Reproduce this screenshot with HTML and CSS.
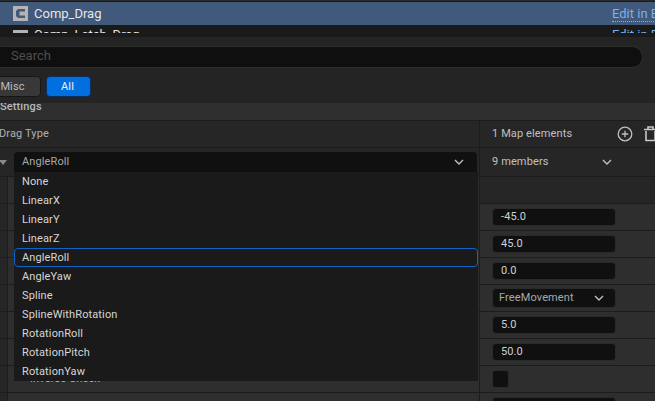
FILE: index.html
```html
<!DOCTYPE html>
<html lang="en">
<head>
  <meta charset="UTF-8" />
  <title>Comp_Drag Details</title>
  <link rel="stylesheet" href="styles.css">
</head>
<body>
  <svg class="icon-defs" width="0" height="0">
    <symbol id="chevron" viewBox="0 0 10 6"><polyline points="1,1 5,5 9,1" fill="none" stroke="#c0c0c0" stroke-width="1.4"/></symbol>
    <symbol id="comp" viewBox="0 0 15 15">
      <path fill="#b4b4b4" fill-rule="evenodd" d="M0 0H15V15H0Z M5 3L3 5V10L5 12H12V9.5H6.5V5.5H12V3Z"/>
    </symbol>
  </svg>

  <div class="asset-list">
    <div class="asset-row selected">
      <svg class="asset-icon"><use href="#comp"/></svg>
      <span class="asset-name">Comp_Drag</span>
      <a class="edit-link">Edit in Blueprint</a>
    </div>
    <div class="asset-row">
      <svg class="asset-icon"><use href="#comp"/></svg>
      <span class="asset-name">Comp_Latch_Drag</span>
      <a class="edit-link">Edit in Blueprint</a>
    </div>
  </div>

  <div class="panel">
    <div class="search">Search</div>
    <div class="filters">
      <button class="filter">Misc</button>
      <button class="filter active">All</button>
    </div>

    <div class="details">
      <div class="section-title"><span>Settings</span></div>

      <div class="row">
        <div class="cell-left label"><span class="drag-label">Drag Type</span></div>
        <div class="cell-right">
          <span class="map-count">1 Map elements</span>
          <svg class="add-icon" width="16" height="16" viewBox="0 0 16 16">
            <circle cx="8" cy="8" r="6.8" fill="none" stroke="#c0c0c0" stroke-width="1.3"/>
            <path d="M8 4.8V11.2M4.8 8H11.2" stroke="#c0c0c0" stroke-width="1.3"/>
          </svg>
          <svg class="trash-icon" width="14" height="16" viewBox="0 0 14 16">
            <path d="M0 3.5H13M4 3V1H9V3M2 5V14.5H11V5" fill="none" stroke="#c8c8c8" stroke-width="1.6"/>
          </svg>
        </div>
      </div>

      <div class="row tall">
        <div class="cell-left">
          <span class="collapse"></span>
          <div class="combo">AngleRoll<svg class="chevron"><use href="#chevron"/></svg></div>
        </div>
        <div class="cell-right">
          <span class="members">9 members</span>
          <svg class="chevron"><use href="#chevron"/></svg>
        </div>
      </div>

      <div class="row"><div class="cell-left nested"></div><div class="cell-right"></div></div>
      <div class="row"><div class="cell-left nested"></div><div class="cell-right"><div class="field num">-45.0</div></div></div>
      <div class="row"><div class="cell-left nested"></div><div class="cell-right"><div class="field num">45.0</div></div></div>
      <div class="row"><div class="cell-left nested"></div><div class="cell-right"><div class="field num">0.0</div></div></div>
      <div class="row"><div class="cell-left nested"></div><div class="cell-right"><div class="field pick">FreeMovement<svg class="chevron"><use href="#chevron"/></svg></div></div></div>
      <div class="row"><div class="cell-left nested"></div><div class="cell-right"><div class="field num">5.0</div></div></div>
      <div class="row"><div class="cell-left nested"></div><div class="cell-right"><div class="field num">50.0</div></div></div>
      <div class="row"><div class="cell-left nested label"><span class="nested-label">Inverse Check</span></div><div class="cell-right"><div class="checkbox"></div></div></div>
      <div class="row"><div class="cell-left nested"></div><div class="cell-right"><div class="field num last">None</div></div></div>

      <ul class="menu">
        <li>None</li>
        <li>LinearX</li>
        <li>LinearY</li>
        <li>LinearZ</li>
        <li class="current">AngleRoll</li>
        <li>AngleYaw</li>
        <li>Spline</li>
        <li>SplineWithRotation</li>
        <li>RotationRoll</li>
        <li>RotationPitch</li>
        <li>RotationYaw</li>
      </ul>
    </div>
  </div>
</body>
</html>
```

FILE: styles.css
```css
html, body {
  margin: 0;
  height: 401px;
  overflow: hidden;
}
body {
  width: 655px;
  font-family: Roboto, sans-serif;
  font-size: 11px;
  letter-spacing: 0.12px;
  color: #c0c0c0;
  background-color: #242424;
}
.icon-defs {
  position: absolute;
}
.asset-list {
  height: 37px;
  padding-top: 2px;
  box-sizing: border-box;
  background-color: #1a1a1a;
  overflow: hidden;
  border-top: 1px solid #2a2a2a;
}
.asset-row {
  display: flex;
  align-items: center;
  height: 23px;
  padding-left: 13px;
  white-space: nowrap;
  position: relative;
}
.asset-row + .asset-row {
  height: 3px;
  align-items: flex-start;
  padding-top: 5px;
  box-sizing: content-box;
  overflow: hidden;
}
.asset-row + .asset-row .asset-name {
  margin-top: -3px;
}
.asset-row + .asset-row .edit-link {
  top: 2px;
}
.asset-row.selected {
  background-color: #41597a;
  margin-top: -1px;
}
.asset-icon {
  width: 15px;
  height: 15px;
  flex: none;
}
.asset-name {
  margin-left: 6px;
  font-size: 13px;
  letter-spacing: 0;
  color: #e6e6e6;
  flex: 1;
}
.edit-link {
  font-size: 13px;
  letter-spacing: 0;
  color: #7db0ee;
  border-bottom: 1px dotted #7db0ee;
  position: absolute;
  left: 612px;
}
.panel {
  padding-top: 9px;
}
.search {
  width: 653px;
  height: 22px;
  margin-left: -10px;
  box-sizing: border-box;
  padding-left: 20px;
  line-height: 18px;
  font-size: 13px;
  letter-spacing: 0;
  color: #4e4e4e;
  background-color: #0f0f0f;
  border: 1px solid #2e2e2e;
  border-radius: 11px;
}
.filters {
  display: flex;
  gap: 5px;
  margin: 8px 0 6px -10px;
}
.filter {
  width: 51px;
  height: 21px;
  padding: 0 6px 1px 0;
  font: 11px Roboto, sans-serif;
  letter-spacing: 0.12px;
  color: #bdbdbd;
  background-color: #383838;
  border: 1px solid #161616;
  border-radius: 4px;
}
.filter.active {
  width: 45px;
  padding: 0 2px 1px 0;
  color: #f0f0f0;
  background-color: #0070e0;
  border-color: #10305a;
}
.details {
  position: relative;
}
.section-title {
  height: 18px;
  box-sizing: border-box;
  overflow: hidden;
  background-color: #2f2f2f;
  border-bottom: 1px solid #1c1c1c;
}
.section-title span {
  display: block;
  margin-top: -3px;
  line-height: 14px;
  font-weight: 500;
  font-size: 11px;
  color: #b8b8b8;
}
.row {
  display: grid;
  grid-template-columns: 479px 1fr;
  height: 27px;
  box-sizing: border-box;
  background-color: #262626;
  border-bottom: 1px solid #1c1c1c;
}
.row.tall {
  height: 29px;
}
.cell-left {
  display: flex;
  align-items: center;
  position: relative;
  overflow: hidden;
  padding-bottom: 2px;
  box-sizing: border-box;
}
.cell-right {
  display: flex;
  align-items: center;
  padding-left: 12px;
  border-left: 1px solid #1c1c1c;
  background-color: #262626;
  position: relative;
}
.label {
  color: #b0b0b0;
}
.drag-label {
  margin-left: -1px;
}
.map-count {
  width: 125px;
  margin-bottom: 2px;
}
.add-icon {
  margin-left: 0;
  flex: none;
}
.trash-icon {
  margin-left: 11px;
  margin-bottom: 1px;
  flex: none;
}
.collapse {
  width: 0;
  height: 0;
  margin: 0 8px 0 -1px;
  border-left: 4px solid transparent;
  border-right: 4px solid transparent;
  border-top: 5px solid #8a8a8a;
  flex: none;
}
.row.tall .cell-left {
  padding-bottom: 0;
}
.combo {
  display: flex;
  align-items: center;
  justify-content: space-between;
  width: 463px;
  height: 20px;
  box-sizing: border-box;
  margin-left: -1px;
  padding: 0 13px 1px 8px;
  color: #a8a8a8;
  background-color: #101010;
  border-radius: 4px 4px 0 0;
}
.chevron {
  width: 10px;
  height: 6px;
  flex: none;
}
.members {
  width: 110px;
  margin-bottom: 2px;
}
.nested {
  background-color: #2e2e2e;
  border-left: 7px solid #262626;
  box-shadow: inset 1px 0 0 #1c1c1c;
}
.nested-label {
  padding-left: 23px;
  color: #b8b8b8;
}
.field {
  width: 124px;
  height: 18px;
  box-sizing: border-box;
  display: flex;
  align-items: center;
  background-color: #101010;
  border: 1px solid #2a2a2a;
  border-radius: 4px;
  color: #d0d0d0;
  font-size: 11px;
  padding: 0 0 1px 8px;
}
.field.pick {
  height: 20px;
  justify-content: space-between;
  padding: 0 11px 1px 6px;
  color: #a8a8a8;
}
.field.last {
  align-self: flex-start;
  margin-top: 4px;
}
.checkbox {
  width: 17px;
  height: 18px;
  box-sizing: border-box;
  background-color: #101010;
  border: 1px solid #2a2a2a;
  border-radius: 3px;
}
.row:nth-child(n+5) .cell-right {
  background-color: #2e2e2e;
}
.menu {
  position: absolute;
  left: 14px;
  top: 69px;
  width: 464px;
  margin: 0;
  padding: 0;
  list-style: none;
  background-color: #1a1a1a;
  color: #d6d6d6;
}
.menu li {
  height: 19px;
  box-sizing: border-box;
  padding-left: 8px;
  line-height: 19px;
}
.menu li.current {
  border: 1px solid #0d63c6;
  border-radius: 4px;
  padding-left: 7px;
  line-height: 17px;
}
```
